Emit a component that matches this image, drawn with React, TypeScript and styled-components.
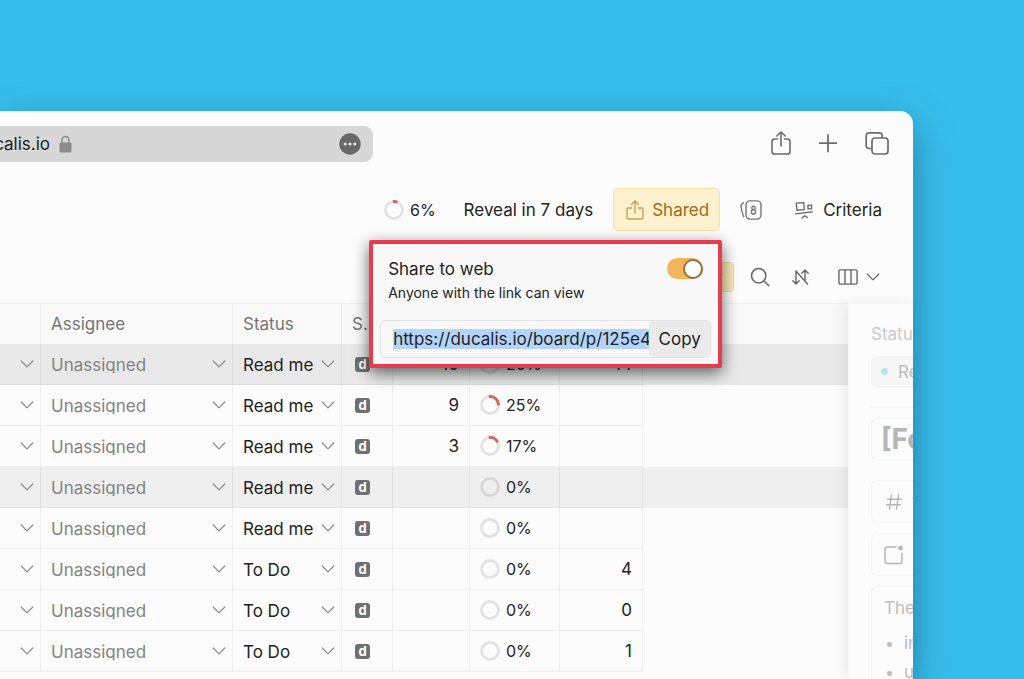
import React from "react";
import styled, { createGlobalStyle, css } from "styled-components";

const GlobalStyle = createGlobalStyle`
  *, *::before, *::after { box-sizing: border-box; }
  html, body { margin: 0; background: #38beec; }
  body, button, input, select {
    font-family: Inter, "Liberation Sans", sans-serif;
    font-size: 17px;
    line-height: 20px;
    color: #222;
  }
  button, input, select { margin: 0; padding: 0; border: 0; background: none; border-radius: 0; }
  button { cursor: pointer; }
  svg { display: block; flex: none; }
`;

const Desktop = styled.div`
  min-height: 100vh;
  padding: 111px 111px 0 0;
  overflow: hidden;
  display: flex;
  background: #38beec;
  max-height: 100vh;
`;

const BrowserWindow = styled.main`
  flex: 1;
  min-width: 0;
  display: flex;
  flex-direction: column;
  background: #fcfcfc;
  border-radius: 0 13px 0 0;
  box-shadow: 0 14px 40px rgba(0, 20, 40, 0.36);
`;

const ChromeBar = styled.header`
  display: flex;
  align-items: center;
  justify-content: space-between;
  padding: 15px 24px 0 0;
`;

const AddressBar = styled.div`
  flex: 0 0 42%;
  height: 36px;
  display: flex;
  align-items: center;
  gap: 9px;
  padding-right: 12px;
  background: #d7d7d7;
  border-radius: 0 9px 9px 0;
`;

const Address = styled.span`
  width: 50px;
  display: flex;
  justify-content: flex-end;
  overflow: hidden;
  white-space: nowrap;
`;

const MoreButton = styled.button`
  margin-left: auto;
`;

const ChromeActions = styled.div`
  display: flex;
  align-items: center;
  gap: 25px;
  padding-bottom: 2px;
`;

const BoardToolbar = styled.div`
  display: flex;
  justify-content: flex-end;
  align-items: center;
  gap: 8px;
  padding: 26px 19px 0 0;
`;

const ToolButton = styled.button<{ $gap?: number; $shared?: boolean; $compact?: boolean }>`
  height: 43px;
  padding: 0 ${(p) => (p.$compact ? 8 : 12)}px 0 12px;
  display: flex;
  align-items: center;
  gap: ${(p) => p.$gap ?? 6}px;
  white-space: nowrap;
  ${(p) => p.$compact && css`font-size: 16px;`}
  ${(p) =>
    p.$shared &&
    css`
      padding: 0 10px 0 12px;
      color: #9c6a22;
      background: #fef1cd;
      border: 1px solid #f6e0a6;
      border-radius: 5px;
    `}
`;

const ShareAnchor = styled.div`
  position: relative;
`;

const Popover = styled.section`
  position: absolute;
  z-index: 5;
  top: 52px;
  right: -2px;
  width: 353px;
  padding: 14px 7px 6px 7px;
  background: #f8f8f8;
  border: 4px solid #e73c4e;
  border-radius: 2px;
  box-shadow: 0 5px 16px rgba(0, 0, 0, 0.6);
`;

const SwitchLabel = styled.label`
  display: flex;
  justify-content: space-between;
  align-items: center;
  padding: 0 8px;
  height: 21px;
`;

const Switch = styled.input`
  appearance: none;
  width: 36px;
  height: 21px;
  display: flex;
  align-items: center;
  justify-content: flex-end;
  margin: 0;
  background: #f3b55c;
  border-radius: 11px;
  &::before {
    content: "";
    width: 20px;
    height: 20px;
    background: #fff;
    border: 2px solid #92713f;
    border-radius: 50%;
  }
`;

const Hint = styled.p`
  margin: 4px 8px 17px;
  font-size: 14px;
  line-height: 20px;
`;

const LinkRow = styled.div`
  display: flex;
  height: 38px;
  border: 1px solid #e4e4e4;
  border-radius: 5px;
  overflow: hidden;
`;

const LinkInput = styled.input`
  flex: 1;
  min-width: 0;
  padding: 8px 0 8px 12px;
  background: #b3d4fd content-box;
`;

const CopyButton = styled.button`
  width: 61px;
  background: #ebebeb;
  border-radius: 4px;
`;

const ViewToolbar = styled.div`
  display: flex;
  justify-content: flex-end;
  align-items: center;
  gap: 20px;
  height: 30px;
  margin: 31px 33px 11px 0;
`;

const FilterButton = styled.button`
  width: 44px;
  height: 30px;
  margin-right: -4px;
  padding-right: 10px;
  display: flex;
  align-items: center;
  justify-content: flex-end;
  background: #fbe9ba;
  border: 1px solid #f0dba3;
  border-radius: 4px;
`;

const ColumnsButton = styled.button`
  display: flex;
  align-items: center;
  gap: 8px;
  padding-left: 6px;
`;

const Workspace = styled.div`
  flex: 1;
  min-height: 0;
  display: flex;
`;

const Board = styled.div`
  flex: 1;
  min-width: 0;
  overflow: hidden;
`;

const Grid = styled.table`
  width: 100%;
  table-layout: fixed;
  border-collapse: separate;
  border-spacing: 0;
`;

const HeadCell = styled.th`
  height: 41px;
  padding: 0 10px;
  font-weight: 400;
  text-align: left;
  color: #757575;
  background: #f9f9f9;
  border-top: 1px solid #efefef;
  border-right: 1px solid #ebebeb;
  white-space: nowrap;
  &:last-child { border-right: 0; }
`;

const Row = styled.tr<{ $tone?: string }>`
  background: ${(p) => p.$tone ?? "transparent"};
`;

const Cell = styled.td<{ $align?: string }>`
  height: 41px;
  padding: 0 10px;
  text-align: ${(p) => p.$align ?? "left"};
  border-right: 1px solid rgba(0, 0, 0, 0.06);
  border-bottom: 1px solid rgba(0, 0, 0, 0.05);
  &:last-child { border: 0; }
`;

const Picker = styled.label`
  display: flex;
  align-items: center;
  justify-content: space-between;
  margin-right: -4px;
`;

const PickerClip = styled.span`
  flex: 1;
  min-width: 0;
  height: 18px;
  overflow: hidden;
`;

const PickerSelect = styled.select<{ $muted?: boolean }>`
  appearance: none;
  display: block;
  width: 100%;
  height: 20px;
  color: ${(p) => (p.$muted ? "#838383" : "#222")};
`;

const ExpandButton = styled.button`
  display: block;
  margin-left: 10px;
`;

const SourceBadge = styled.span`
  display: flex;
  align-items: center;
  justify-content: center;
  width: 15px;
  height: 15px;
  margin-left: 3px;
  color: #fff;
  background: #707070;
  border-radius: 3px;
  font-size: 13px;
  line-height: 15px;
  font-weight: 700;
`;

const Progress = styled.span`
  display: flex;
  align-items: center;
  gap: 6px;
  font-size: 16px;
`;

const Details = styled.aside`
  flex: 0 0 65px;
  padding: 20px 0 0 21px;
  overflow: hidden;
  white-space: nowrap;
  color: #bdbdbd;
  background: #fcfcfc;
  border-left: 2px solid #f8f8f8;
  border-top: 1px solid #f7f7f7;
  box-shadow: -3px 0 14px rgba(0, 0, 0, 0.08);
  z-index: 1;
  display: flex;
  flex-direction: column;
  align-items: stretch;
`;

const Field = styled.div<{ $height: number; $filled?: boolean; $heading?: boolean }>`
  flex: none;
  height: ${(p) => p.$height}px;
  margin-bottom: ${(p) => (p.$heading ? 20 : 10)}px;
  padding-left: ${(p) => (p.$heading ? 9 : 12)}px;
  display: flex;
  align-items: center;
  gap: 8px;
  border: 1px solid #f3f3f3;
  border-right: 0;
  border-radius: 6px 0 0 6px;
  background: ${(p) => (p.$filled ? "#f7f7f7" : "transparent")};
`;

const FieldLabel = styled.div`
  margin-bottom: 12px;
  color: #cacaca;
`;

const StatusDot = styled.span`
  flex: none;
  width: 7px;
  height: 7px;
  margin: 0 2px 0 -3px;
  background: #bce4e9;
  border-radius: 50%;
`;

const Divider = styled.hr`
  flex: none;
  width: 100%;
  margin: 10px 0;
  border: 0;
  border-top: 1px solid #f3f3f3;
`;

const Title = styled.h2`
  margin: 0;
  font-size: 28px;
  line-height: 32px;
  font-weight: 700;
  color: #b5b5b5;
`;

const Description = styled.div`
  flex: 1 0 auto;
  padding: 11px 0 0 12px;
  border: 1px solid #f3f3f3;
  border-right: 0;
  border-radius: 6px 0 0 0;
`;

const Bullets = styled.ul`
  margin: 11px 0 0;
  padding-left: 20px;
  line-height: 29px;
`;

const ShareIcon = ({ width, height, color }: { width: number; height: number; color: string }) => (
  <svg width={width} height={height} viewBox="0 0 20 24" fill="none" stroke={color} strokeWidth="1.6" strokeLinecap="round" strokeLinejoin="round">
    <path d="M6.500 8H3.600C2 8 1 9 1 10.400v10C1 22 2 23 3.600 23h12.800c1.600 0 2.600-1 2.600-2.600v-10C19 9 18 8 16.400 8H13.500M10 15V1.200M5.800 5L10 1l4.200 4" />
  </svg>
);

const SharedIcon = () => (
  <svg width="18" height="20" viewBox="0 0 18 20" fill="none" stroke="#c79a58" strokeWidth="1.3" strokeLinecap="round" strokeLinejoin="round">
    <path d="M5.500 8H2.500C1.500 8 1 8.500 1 9.300v8.400c0 .8.500 1.300 1.500 1.300h13c1 0 1.500-.5 1.500-1.300V9.300c0-.8-.5-1.300-1.500-1.300h-3M9 13V1M5.500 4.500L9 1l3.500 3.500" />
  </svg>
);

const Chevron = ({ color = "#8a8a8a", width = 14 }: { color?: string; width?: number }) => (
  <svg width={width} height="8" viewBox="0 0 14 8" fill="none" stroke={color} strokeWidth="1.2" strokeLinecap="round" strokeLinejoin="round">
    <path d="M1.200 1L7 6.800 12.800 1" />
  </svg>
);

const Ring = ({ value }: { value: number }) => (
  <svg width="20" height="20" viewBox="0 0 20 20" fill="none" strokeWidth="2.800">
    <circle cx="10" cy="10" r="8.500" stroke="#000" strokeOpacity="0.1" />
    {value > 0 && (
      <circle cx="10" cy="10" r="8.500" stroke="#df6259" pathLength={100} strokeDasharray={`${value + 3} 100`} transform="rotate(-98 10 10)" />
    )}
  </svg>
);

type Item = { status: string; score?: number; progress: number; votes?: number; tone?: string };

const items: Item[] = [
  { status: "Read me", score: 10, progress: 20, votes: 14, tone: "#e9e9e9" },
  { status: "Read me", score: 9, progress: 25 },
  { status: "Read me", score: 3, progress: 17 },
  { status: "Read me", progress: 0, tone: "#efefef" },
  { status: "Read me", progress: 0 },
  { status: "To Do", progress: 0, votes: 4 },
  { status: "To Do", progress: 0, votes: 0 },
  { status: "To Do", progress: 0, votes: 1 },
];

const columnWidths = [41, 192, 109, 51, 77, 90, 83];

export default function App() {
  return (
    <Desktop>
      <GlobalStyle />
      <BrowserWindow>
        <ChromeBar>
          <AddressBar>
            <Address>ducalis.io</Address>
            <svg width="13" height="18" viewBox="0 0 13 18">
              <path d="M3 9V5a3.500 3.500 0 0 1 7 0v4" fill="none" stroke="#8b8b8b" strokeWidth="1.500" />
              <rect x="0.500" y="7.500" width="12" height="10" rx="1.500" fill="#8b8b8b" />
            </svg>
            <MoreButton aria-label="Page menu">
              <svg width="22" height="22" viewBox="0 0 22 22">
                <circle cx="11" cy="11" r="10.700" fill="#686868" />
                <g fill="#e4e4e4">
                  <circle cx="6.200" cy="11" r="1.600" />
                  <circle cx="11" cy="11" r="1.600" />
                  <circle cx="15.800" cy="11" r="1.600" />
                </g>
              </svg>
            </MoreButton>
          </AddressBar>
          <ChromeActions>
            <button aria-label="Share">
              <ShareIcon width={20} height={24} color="#6c6c6c" />
            </button>
            <button aria-label="New tab">
              <svg width="24" height="24" viewBox="0 0 24 24" fill="none" stroke="#6c6c6c" strokeWidth="1.800" strokeLinecap="round">
                <path d="M12 4v16.500M3.700 12.200h16.600" />
              </svg>
            </button>
            <button aria-label="Tab overview">
              <svg width="24" height="24" viewBox="0 0 24 24" fill="none" stroke="#6c6c6c" strokeWidth="1.700" strokeLinejoin="round">
                <rect x="7" y="7" width="16" height="16" rx="3" />
                <path d="M7 17.500H4.200C2.400 17.500 1.200 16.300 1.200 14.500V4.800C1.200 3 2.400 1.800 4.200 1.800h9.900c1.800 0 3 1.200 3 3V7" />
              </svg>
            </button>
          </ChromeActions>
        </ChromeBar>

        <BoardToolbar>
          <ToolButton $compact>
            <Ring value={6} />
            6%
          </ToolButton>
          <ToolButton>Reveal in 7 days</ToolButton>
          <ShareAnchor>
            <ToolButton $shared $gap={8}>
              <SharedIcon />
              Shared
            </ToolButton>
            <Popover>
              <SwitchLabel>
                Share to web
                <Switch type="checkbox" role="switch" defaultChecked />
              </SwitchLabel>
              <Hint>Anyone with the link can view</Hint>
              <LinkRow>
                <LinkInput readOnly aria-label="Public link" value="https://ducalis.io/board/p/125e4a" />
                <CopyButton>Copy</CopyButton>
              </LinkRow>
            </Popover>
          </ShareAnchor>
          <ToolButton aria-label="Estimation cards">
            <svg width="22" height="20" viewBox="0 0 22 20" fill="none" stroke="#777" strokeWidth="1.400" strokeLinecap="round">
              <rect x="6" y="0.900" width="15" height="18.200" rx="4" />
              <path d="M3.500 2.800C1.500 3.600.9 4.800 1.100 6.500c.3 3.300 1.200 7 2.600 10.200" />
              <circle cx="13.500" cy="7.900" r="1.700" />
              <circle cx="13.500" cy="11.900" r="2.100" />
            </svg>
          </ToolButton>
          <ToolButton $gap={9}>
            <svg width="20" height="18" viewBox="0 0 20 18" fill="none" stroke="#666" strokeWidth="1.300" strokeLinecap="round">
              <path d="M2.300 2.200l7.400-.6.600 7-7.400.6zM1.500 12.800l17-2M8 17l2.700-2.200 2.800 1.700" />
              <rect x="14" y="4.200" width="3.600" height="3.600" />
            </svg>
            Criteria
          </ToolButton>
        </BoardToolbar>

        <ViewToolbar>
          <FilterButton aria-label="Filters">
            <Chevron color="#b98d45" width={10} />
          </FilterButton>
          <button aria-label="Search">
            <svg width="20" height="20" viewBox="0 0 20 20" fill="none" stroke="#666" strokeWidth="1.500" strokeLinecap="round">
              <circle cx="8.700" cy="8.700" r="7.200" />
              <path d="M14 14l4.800 4.800" />
            </svg>
          </button>
          <button aria-label="Sort">
            <svg width="22" height="20" viewBox="0 0 22 20" fill="none" stroke="#666" strokeWidth="1.400" strokeLinecap="round" strokeLinejoin="round">
              <path d="M6 4v13M2.800 13.700L6 17l3.200-3.300M15 14V3M11.800 6.300L15 3l3.200 3.300M6 4l11.500 13" />
            </svg>
          </button>
          <ColumnsButton aria-label="Columns">
            <svg width="20" height="16" viewBox="0 0 20 16" fill="none" stroke="#666" strokeWidth="1.400">
              <rect x="0.900" y="0.900" width="18.200" height="14.200" rx="1.500" />
              <path d="M7 1v14M13 1v14" />
            </svg>
            <Chevron color="#666" />
          </ColumnsButton>
        </ViewToolbar>

        <Workspace>
          <Board>
            <Grid>
              <colgroup>
                {columnWidths.map((w, i) => (
                  <col key={i} width={w} />
                ))}
                <col />
              </colgroup>
              <thead>
                <tr>
                  <HeadCell />
                  <HeadCell>Assignee</HeadCell>
                  <HeadCell>Status</HeadCell>
                  <HeadCell>S...</HeadCell>
                  <HeadCell />
                  <HeadCell />
                  <HeadCell />
                  <HeadCell />
                </tr>
              </thead>
              <tbody>
                {items.map((item, i) => (
                  <Row key={i} $tone={item.tone}>
                    <Cell>
                      <ExpandButton aria-label="Open list">
                        <Chevron />
                      </ExpandButton>
                    </Cell>
                    <Cell>
                      <Picker>
                        <PickerClip>
                          <PickerSelect $muted aria-label="Assignee">
                            <option>Unassigned</option>
                          </PickerSelect>
                        </PickerClip>
                        <Chevron />
                      </Picker>
                    </Cell>
                    <Cell>
                      <Picker>
                        <PickerClip>
                          <PickerSelect aria-label="Status" defaultValue={item.status}>
                            <option>Read me</option>
                            <option>To Do</option>
                          </PickerSelect>
                        </PickerClip>
                        <Chevron />
                      </Picker>
                    </Cell>
                    <Cell>
                      <SourceBadge>d</SourceBadge>
                    </Cell>
                    <Cell $align="right">{item.score}</Cell>
                    <Cell>
                      <Progress>
                        <Ring value={item.progress} />
                        {item.progress}%
                      </Progress>
                    </Cell>
                    <Cell $align="right">{item.votes}</Cell>
                    <Cell />
                  </Row>
                ))}
              </tbody>
            </Grid>
          </Board>

          <Details>
            <FieldLabel>Status</FieldLabel>
            <Field $height={31} $filled>
              <StatusDot />
              Read me
            </Field>
            <Divider />
            <Field $height={42} $heading>
              <Title>[Feature]</Title>
            </Field>
            <Field $height={43}>
              <svg width="20" height="20" viewBox="0 0 20 20" fill="none" stroke="#b5b5b5" strokeWidth="1.400" strokeLinecap="round">
                <path d="M7.500 3L5.500 17M14.500 3l-2 14M3.500 7.200h14M2.500 12.800h14" />
              </svg>
              1
            </Field>
            <Field $height={43}>
              <svg width="20" height="20" viewBox="0 0 20 20" fill="none" stroke="#b5b5b5" strokeWidth="1.500" strokeLinecap="round">
                <path d="M12 2H3.500C2 2 1 3 1 4.500v11C1 17 2 18.500 3.500 18.500h12c1.500 0 2.500-1.500 2.500-3V8.500" />
                <circle cx="16.500" cy="3" r="2.300" fill="#b5b5b5" stroke="none" />
              </svg>
            </Field>
            <Description>
              The board
              <Bullets>
                <li>in progress</li>
                <li>upcoming</li>
              </Bullets>
            </Description>
          </Details>
        </Workspace>
      </BrowserWindow>
    </Desktop>
  );
}
